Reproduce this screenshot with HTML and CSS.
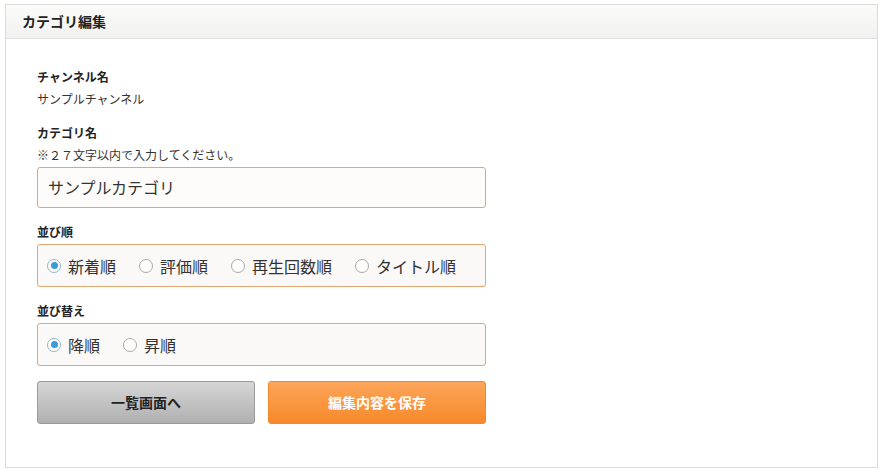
FILE: index.html
```html
<!DOCTYPE html>
<html lang="ja">
<head>
<meta charset="utf-8">
<link rel="stylesheet" href="styles.css">
</head>
<body>
<div class="panel">
  <div class="panel-head">カテゴリ編集</div>
  <div class="panel-body">
    <div class="field first">
      <div class="label">チャンネル名</div>
      <div class="value">サンプルチャンネル</div>
    </div>
    <div class="field">
      <div class="label">カテゴリ名</div>
      <div class="note">※２７文字以内で入力してください。</div>
      <div class="input">サンプルカテゴリ</div>
    </div>
    <div class="field">
      <div class="label">並び順</div>
      <div class="radio-box">
        <span class="radio"><span class="dot on"></span>新着順</span>
        <span class="radio"><span class="dot"></span>評価順</span>
        <span class="radio"><span class="dot"></span>再生回数順</span>
        <span class="radio"><span class="dot"></span>タイトル順</span>
      </div>
    </div>
    <div class="field">
      <div class="label">並び替え</div>
      <div class="radio-box">
        <span class="radio"><span class="dot on"></span>降順</span>
        <span class="radio"><span class="dot"></span>昇順</span>
      </div>
    </div>
    <div class="buttons">
      <div class="btn btn-gray">一覧画面へ</div>
      <div class="btn btn-orange">編集内容を保存</div>
    </div>
  </div>
</div>
</body>
</html>
```
FILE: styles.css
```css
html, body {
  margin: 0;
  padding: 0;
  background: #fff;
}
body {
  font-family: "Noto Sans CJK JP", "Noto Sans", sans-serif;
  color: #333;
  padding: 4px 2px 0 5px;
}
.panel {
  width: 871px;
  height: 462px;
  border: 1px solid #dcdcdc;
  box-sizing: content-box;
}
.panel-head {
  height: 33px;
  border-bottom: 1px solid #dedede;
  background: linear-gradient(#fbfbfa, #f1f1ef);
  font-size: 14px;
  font-weight: bold;
  line-height: 32px;
  padding-left: 16px;
  color: #222;
}
.panel-body {
  padding: 0 0 0 31px;
  width: 449px;
}
.field {
  margin-top: 15px;
}
.field.first {
  margin-top: 29px;
}
.field + .field:nth-child(2) {
  margin-top: 16px;
}
.label {
  font-size: 12px;
  font-weight: bold;
  line-height: 18px;
  color: #222;
}
.value {
  font-size: 12px;
  line-height: 18px;
  margin-top: 4px;
  color: #333;
}
.note {
  font-size: 12px;
  line-height: 18px;
  margin-top: 4px;
  color: #333;
}
.input {
  margin-top: 3px;
  height: 39px;
  border: 1px solid #e5a571;
  border-radius: 3px;
  background: #fdfcfb;
  font-size: 16px;
  line-height: 38px;
  padding-left: 10px;
  color: #333;
}
.radio-box {
  margin-top: 3px;
  height: 41px;
  border: 1px solid #e5a571;
  border-radius: 3px;
  background: #faf9f8;
  display: flex;
  align-items: center;
  padding-left: 9px;
  gap: 23px;
}
.radio {
  display: flex;
  align-items: center;
  gap: 7px;
  font-size: 16px;
  line-height: 20px;
  color: #333;
}
.dot {
  width: 14px;
  height: 14px;
  border: 1px solid #a8a8a8;
  border-radius: 50%;
  background: #fff;
  box-sizing: border-box;
  position: relative;
}
.dot.on {
  border-color: #8fb5d0;
}
.dot.on::after {
  content: "";
  position: absolute;
  left: 2.5px;
  top: 2.5px;
  width: 7px;
  height: 7px;
  border-radius: 50%;
  background: #3c9ad8;
}
.buttons {
  margin-top: 15px;
  display: flex;
  justify-content: space-between;
}
.btn {
  width: 218px;
  height: 43px;
  box-sizing: border-box;
  border-radius: 3px;
  font-size: 14px;
  font-weight: bold;
  text-align: center;
  line-height: 41px;
}
.btn-gray {
  border: 1px solid #9a9a9a;
  background: linear-gradient(#d6d6d6, #b0b0b0);
  color: #222;
}
.btn-orange {
  border: 1px solid #f08a2c;
  background: linear-gradient(#fca55a, #f7892a);
  color: #fff;
}
```
